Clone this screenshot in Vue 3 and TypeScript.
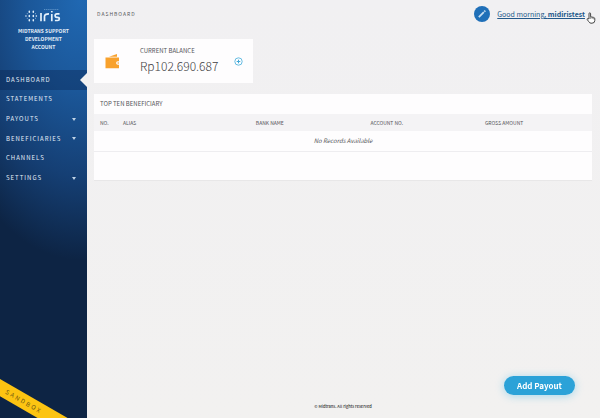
<script setup lang="ts">
interface MenuItem {
  label: string
  active?: boolean
  expandable?: boolean
}

const menu: MenuItem[] = [
  { label: 'Dashboard', active: true },
  { label: 'Statements' },
  { label: 'Payouts', expandable: true },
  { label: 'Beneficiaries', expandable: true },
  { label: 'Channels' },
  { label: 'Settings', expandable: true },
]

const columns: string[] = ['No.', 'Alias', 'Bank Name', 'Account No.', 'Gross Amount']
const balance = 'Rp102.690.687'
</script>

<template>
  <div class="layout">
    <aside class="sidebar">
      <div class="brand">
        <svg class="logo" viewBox="0 0 38 16" role="img" aria-label="Iris">
          <g fill="none" stroke="#e4f1fc" stroke-width="1.5" stroke-linecap="round">
            <path d="M.9 8h.1M4.300 3.300v1M4.300 7.500v1M4.300 11.700v1M8.300 3.300v1M8.300 7.500v1M8.300 11.700v1M11.300 8h.1" />
            <path d="M2.200 5.700h.1M2.200 10.300h.1M10.400 5.700h.1M10.400 10.300h.1" stroke-width="1" opacity=".6" />
          </g>
          <g fill="none" stroke="#e4f1fc" stroke-width="1.700">
            <path d="M16 5v8.200M19.500 13.200V8.500Q19.500 5.900 24 5.900M26.800 6v7.200M34.500 5.900h-2.600q-1.800 0-1.800 1.700t1.800 1.800h.6q1.800 0 1.800 1.500t-1.800 1.600h-2.600" />
            <path d="M26.800 3v1.400" />
          </g>
          <path d="M19 1.500h15" stroke="#5c91c6" stroke-width="1.200" stroke-dasharray="1.300 .8" />
        </svg>
        <p class="account">Midtrans Support Development Account</p>
      </div>
      <nav class="menu" aria-label="Main">
        <a v-for="item in menu" :key="item.label" href="#" class="menu-item" :class="{ active: item.active }">
          <span>{{ item.label }}</span>
          <span v-if="item.expandable" class="caret"></span>
        </a>
      </nav>
      <div class="ribbon">Sandbox</div>
    </aside>

    <main class="main">
      <header class="topbar">
        <h1>Dashboard</h1>
        <div class="user">
          <span class="avatar">
            <svg viewBox="0 0 16 16" aria-hidden="true">
              <path d="M4.800 11.200 9.800 6.200" stroke="#c5def2" stroke-width="1.800" />
              <path d="M10.300 5.700 11.300 4.700" stroke="#c5def2" stroke-width="1.800" />
            </svg>
          </span>
          <a href="#" class="greeting">Good morning, <b>midiristest</b></a>
          <svg class="hand" viewBox="0 0 10 12" aria-hidden="true">
            <path d="M3 7V1.800Q3 .8 3.800 .8t.8 1v3l3 .6q1.200.3 1.200 1.400v1.700q0 2.700-2.800 2.700H5Q3.700 11.200 2.800 9.700L1.200 7.500Q1 6.500 2 6.500z" fill="#fff" stroke="#444" stroke-width="1" stroke-linejoin="round" />
            <path d="M4.600 5v2M6.200 5.300v1.700M7.600 5.700v1.600" stroke="#555" stroke-width=".6" />
          </svg>
        </div>
      </header>

      <section class="balance">
        <svg class="wallet" viewBox="0 0 15 16" aria-hidden="true">
          <path d="M4 3.700 12 1v2.700z" fill="#f8a12c" />
          <path d="M.5 4.500h13.500v3.800h-1.200q-1.700 0-1.700 1.700t1.700 1.700H14v3.600H.5z" fill="#f8a12c" />
          <circle cx="13.200" cy="10" r=".8" fill="#f8a12c" />
        </svg>
        <div class="figures">
          <h2>Current Balance</h2>
          <p>{{ balance }}</p>
        </div>
        <button class="add" type="button" aria-label="Top up">
          <svg viewBox="0 0 9 9" aria-hidden="true">
            <circle cx="4.500" cy="4.500" r="3.700" fill="none" stroke="#55b6df" stroke-width=".9" />
            <path d="M4.500 2.700v3.600M2.700 4.500h3.600" stroke="#42a9d8" stroke-width="1" />
          </svg>
        </button>
      </section>

      <section class="panel">
        <h2 class="panel-title">Top Ten Beneficiary</h2>
        <table>
          <thead>
            <tr>
              <th v-for="column in columns" :key="column" scope="col">{{ column }}</th>
            </tr>
          </thead>
          <tbody>
            <tr>
              <td :colspan="columns.length">No Records Available</td>
            </tr>
          </tbody>
        </table>
        <div class="panel-foot"></div>
      </section>

      <footer class="footer">© Midtrans. All rights reserved</footer>
      <button class="payout" type="button">Add Payout</button>
    </main>
  </div>
</template>

<style>
body {
  background: #f2f1f1;
}
</style>

<style scoped>
.layout {
  display: grid;
  grid-template-columns: 87px 1fr;
  min-height: 100vh;
  font-family: "Noto Sans CJK SC", "Open Sans", sans-serif;
  color: #55555a;
}
h1, h2, p {
  margin: 0;
  font-weight: 400;
}
a {
  color: inherit;
  text-decoration: none;
}
button {
  padding: 0;
  border: 0;
  font-family: inherit;
}
svg {
  display: block;
}
.sidebar {
  position: relative;
  overflow: hidden;
  background: radial-gradient(ellipse 150px 260px at 80px 0, #2068b2 0%, #1b5799 35%, #153f74 68%, #0d2444 100%);
  color: #e3edf7;
}
.brand {
  display: flex;
  flex-direction: column;
  align-items: center;
  box-sizing: border-box;
  height: 70px;
  padding-top: 8px;
}
.logo {
  width: 38px;
  height: 16px;
}
.account {
  width: 56px;
  margin-top: 3px;
  font-size: 5px;
  font-weight: 700;
  line-height: 8px;
  text-align: center;
  text-transform: uppercase;
}
.menu {
  display: grid;
  grid-template-rows: repeat(6, 1fr);
  height: 118px;
}
.menu-item {
  position: relative;
  display: flex;
  align-items: center;
  justify-content: space-between;
  padding: 0 11px 0 6px;
  font-size: 6px;
  line-height: 8px;
  letter-spacing: 1px;
  text-transform: uppercase;
}
.menu-item.active {
  background: rgba(8, 32, 72, 0.35);
}
.menu-item.active::after {
  content: "";
  position: absolute;
  top: 3px;
  right: 0;
  border: 7px solid transparent;
  border-right-color: #f2f1f1;
  border-left: 0;
}
.caret {
  border: 2px solid transparent;
  border-top: 3px solid #c0d3e6;
  border-bottom: 0;
}
.ribbon {
  position: absolute;
  left: -36px;
  bottom: 9px;
  width: 120px;
  background: #fcc412;
  color: #6b5513;
  font-size: 6px;
  line-height: 15px;
  letter-spacing: 2px;
  text-align: center;
  text-transform: uppercase;
  transform: rotate(30deg);
}
.main {
  display: flex;
  flex-direction: column;
  padding: 0 8px 0 7px;
  background: linear-gradient(#f1f0f2, #f2f1f0);
}
.topbar {
  display: flex;
  align-items: center;
  justify-content: space-between;
  height: 28px;
  padding-left: 3px;
}
.topbar h1 {
  font-size: 5px;
  line-height: 8px;
  letter-spacing: 1px;
  text-transform: uppercase;
}
.user {
  display: flex;
  align-items: center;
  margin-right: -4px;
}
.avatar {
  width: 16px;
  height: 16px;
  margin-right: 7px;
  border-radius: 50%;
  background: #1f6fb8;
}
.greeting {
  margin-right: 1px;
  color: #24598a;
  font-size: 7px;
  line-height: 10px;
  text-decoration: underline;
}
.hand {
  width: 10px;
  height: 12px;
  margin-top: 8px;
}
.balance {
  display: flex;
  align-items: center;
  box-sizing: border-box;
  width: 159px;
  height: 44px;
  margin-top: 11px;
  padding: 0 10px 0 11px;
  background: #fefdfe;
}
.wallet {
  width: 15px;
  height: 16px;
}
.figures {
  flex: 1;
  margin-left: 20px;
}
.figures h2 {
  font-size: 6px;
  line-height: 10px;
  text-transform: uppercase;
}
.figures p {
  color: #3e3e42;
  font-size: 12px;
  font-weight: 300;
  line-height: 20px;
}
.add {
  width: 9px;
  height: 9px;
  background: none;
}
.panel {
  margin-top: 11px;
  background: #fefdfe;
}
.panel-title {
  padding-left: 6px;
  font-size: 6px;
  line-height: 20px;
  text-transform: uppercase;
}
table {
  width: 100%;
  border-spacing: 0;
  table-layout: fixed;
}
th {
  height: 17px;
  padding: 0;
  background: #f4f3f5;
  font-size: 5px;
  font-weight: 400;
  line-height: 8px;
  text-align: left;
  text-transform: uppercase;
}
th:first-child {
  width: 4.6%;
  padding-left: 6px;
}
th:nth-child(2) {
  width: 26.7%;
}
th:nth-child(3),
th:nth-child(4) {
  width: 23%;
}
td {
  height: 20px;
  padding: 0;
  border-bottom: 1px solid #eeedf0;
  font-size: 6px;
  font-style: italic;
  line-height: 8px;
  text-align: center;
}
.panel-foot {
  height: 28px;
  border-bottom: 1px solid #e8e7e8;
}
.footer {
  margin-top: auto;
  padding-bottom: 8px;
  color: #333;
  font-size: 4px;
  font-weight: 500;
  line-height: 8px;
  text-align: center;
}
.payout {
  position: fixed;
  right: 25px;
  bottom: 23px;
  width: 71px;
  height: 19px;
  border-radius: 10px;
  background: #2ba2d8;
  box-shadow: 0 1px 8px rgba(43, 175, 230, 0.4);
  color: #fff;
  font-size: 8px;
  font-weight: 700;
  line-height: 19px;
}
</style>
